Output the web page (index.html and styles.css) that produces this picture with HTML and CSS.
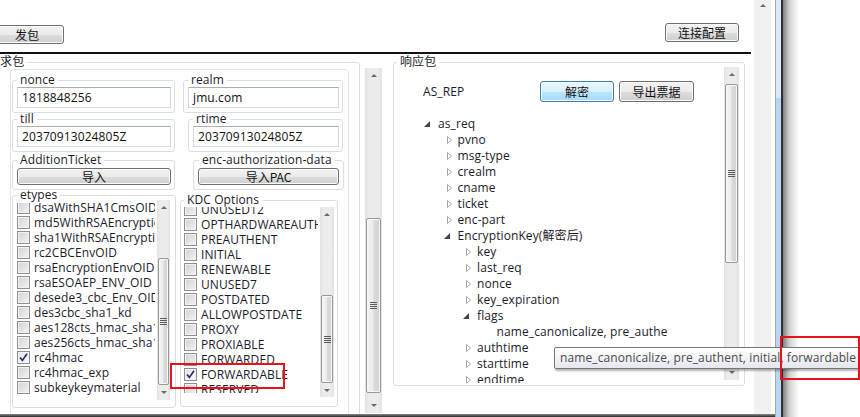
FILE: index.html
```html
<!DOCTYPE html>
<html lang="zh">
<head>
<meta charset="utf-8">
<title>Kerberos 发包</title>
<link rel="stylesheet" href="styles.css">
</head>
<body>
<div class="screen">
  <div class="window">
    <div class="window-top">
      <div class="client">
        <div class="toolbar">
          <button class="btn btn-send">发包</button>
          <button class="btn btn-conn">连接配置</button>
        </div>
        <div class="rule"></div>
        <div class="main">
          <fieldset class="gb gb-req">
            <legend>请求包</legend>
            <div class="req-panel">
              <div class="row row1">
                <fieldset class="gb gb-nonce"><legend>nonce</legend><div class="gb-body body-tb"><div class="tb">1818848256</div></div></fieldset>
                <fieldset class="gb gb-realm"><legend>realm</legend><div class="gb-body body-tb"><div class="tb">jmu.com</div></div></fieldset>
              </div>
              <div class="row row2">
                <fieldset class="gb gb-till"><legend>till</legend><div class="gb-body body-tb"><div class="tb">20370913024805Z</div></div></fieldset>
                <fieldset class="gb gb-rtime"><legend>rtime</legend><div class="gb-body body-tb"><div class="tb">20370913024805Z</div></div></fieldset>
              </div>
              <div class="row row3">
                <fieldset class="gb gb-addt"><legend>AdditionTicket</legend><div class="gb-body body-btn"><button class="btn btn-wide">导入</button></div></fieldset>
                <fieldset class="gb gb-enca"><legend>enc-authorization-data</legend><div class="gb-body body-btn body-enca"><button class="btn btn-wide">导入PAC</button></div></fieldset>
              </div>
              <div class="row row4">
                <fieldset class="gb gb-etypes">
                  <legend>etypes</legend>
                  <div class="list list-etypes">
                    <div class="items">
                      <div class="items-inner">
                        <div class="item"><span class="cb"></span><span class="lbl">dsaWithSHA1CmsOID</span></div>
                        <div class="item"><span class="cb"></span><span class="lbl">md5WithRSAEncryption</span></div>
                        <div class="item"><span class="cb"></span><span class="lbl">sha1WithRSAEncryption</span></div>
                        <div class="item"><span class="cb"></span><span class="lbl">rc2CBCEnvOID</span></div>
                        <div class="item"><span class="cb"></span><span class="lbl">rsaEncryptionEnvOID</span></div>
                        <div class="item"><span class="cb"></span><span class="lbl">rsaESOAEP_ENV_OID</span></div>
                        <div class="item"><span class="cb"></span><span class="lbl">desede3_cbc_Env_OID</span></div>
                        <div class="item"><span class="cb"></span><span class="lbl">des3cbc_sha1_kd</span></div>
                        <div class="item"><span class="cb"></span><span class="lbl">aes128cts_hmac_sha1_96</span></div>
                        <div class="item"><span class="cb"></span><span class="lbl">aes256cts_hmac_sha1_96</span></div>
                        <div class="item"><span class="cb checked"><svg viewBox="0 0 11 11" width="11" height="11"><path d="M2 5.5 L4.4 8.4 L9 1.8" fill="none" stroke="#22307a" stroke-width="1.7"/></svg></span><span class="lbl">rc4hmac</span></div>
                        <div class="item"><span class="cb"></span><span class="lbl">rc4hmac_exp</span></div>
                        <div class="item"><span class="cb"></span><span class="lbl">subkeykeymaterial</span></div>
                      </div>
                    </div>
                    <div class="sb sb-etypes">
                      <div class="sb-btn"><span class="arr-up"></span></div>
                      <div class="sb-track"><div class="sb-thumb"><span class="grip"></span></div></div>
                      <div class="sb-btn"><span class="arr-down"></span></div>
                    </div>
                  </div>
                </fieldset>
                <fieldset class="gb gb-kdc">
                  <legend>KDC Options</legend>
                  <div class="list list-kdc">
                    <div class="items">
                      <div class="items-inner">
                        <div class="item"><span class="cb"></span><span class="lbl">UNUSED12</span></div>
                        <div class="item"><span class="cb"></span><span class="lbl">OPTHARDWAREAUTH</span></div>
                        <div class="item"><span class="cb"></span><span class="lbl">PREAUTHENT</span></div>
                        <div class="item"><span class="cb"></span><span class="lbl">INITIAL</span></div>
                        <div class="item"><span class="cb"></span><span class="lbl">RENEWABLE</span></div>
                        <div class="item"><span class="cb"></span><span class="lbl">UNUSED7</span></div>
                        <div class="item"><span class="cb"></span><span class="lbl">POSTDATED</span></div>
                        <div class="item"><span class="cb"></span><span class="lbl">ALLOWPOSTDATE</span></div>
                        <div class="item"><span class="cb"></span><span class="lbl">PROXY</span></div>
                        <div class="item"><span class="cb"></span><span class="lbl">PROXIABLE</span></div>
                        <div class="item"><span class="cb"></span><span class="lbl">FORWARDED</span></div>
                        <div class="item"><span class="cb checked"><svg viewBox="0 0 11 11" width="11" height="11"><path d="M2 5.5 L4.4 8.4 L9 1.8" fill="none" stroke="#22307a" stroke-width="1.7"/></svg></span><span class="lbl">FORWARDABLE</span></div>
                        <div class="item"><span class="cb"></span><span class="lbl">RESERVED</span></div>
                      </div>
                    </div>
                    <div class="sb sb-kdc">
                      <div class="sb-btn"><span class="arr-up"></span></div>
                      <div class="sb-track"><div class="sb-thumb"><span class="grip"></span></div></div>
                      <div class="sb-btn"><span class="arr-down"></span></div>
                    </div>
                  </div>
                </fieldset>
              </div>
            </div>
          </fieldset>

          <div class="sb sb-outer">
            <div class="sb-btn"><span class="arr-up"></span></div>
            <div class="sb-track"><div class="sb-thumb"><span class="grip"></span></div></div>
            <div class="sb-btn"><span class="arr-down"></span></div>
          </div>

          <fieldset class="gb gb-resp">
            <legend>响应包</legend>
            <div class="resp-inner">
              <div class="resp-body">
                <div class="resp-head">
                  <span class="as-rep">AS_REP</span>
                  <button class="btn btn-blue">解密</button>
                  <button class="btn btn-export">导出票据</button>
                </div>
                <div class="tree">
                  <div class="node l0"><span class="exp expanded"><svg width="6" height="6" viewBox="0 0 6 6"><path d="M6 0 L6 6 L0 6 Z" fill="#444"/></svg></span><span>as_req</span></div>
                  <div class="node l1"><span class="exp collapsed"><svg width="5" height="8" viewBox="0 0 5 8"><path d="M0.5 0.5 L4.5 4 L0.5 7.5 Z" fill="#fff" stroke="#a6a6a6"/></svg></span><span>pvno</span></div>
                  <div class="node l1"><span class="exp collapsed"><svg width="5" height="8" viewBox="0 0 5 8"><path d="M0.5 0.5 L4.5 4 L0.5 7.5 Z" fill="#fff" stroke="#a6a6a6"/></svg></span><span>msg-type</span></div>
                  <div class="node l1"><span class="exp collapsed"><svg width="5" height="8" viewBox="0 0 5 8"><path d="M0.5 0.5 L4.5 4 L0.5 7.5 Z" fill="#fff" stroke="#a6a6a6"/></svg></span><span>crealm</span></div>
                  <div class="node l1"><span class="exp collapsed"><svg width="5" height="8" viewBox="0 0 5 8"><path d="M0.5 0.5 L4.5 4 L0.5 7.5 Z" fill="#fff" stroke="#a6a6a6"/></svg></span><span>cname</span></div>
                  <div class="node l1"><span class="exp collapsed"><svg width="5" height="8" viewBox="0 0 5 8"><path d="M0.5 0.5 L4.5 4 L0.5 7.5 Z" fill="#fff" stroke="#a6a6a6"/></svg></span><span>ticket</span></div>
                  <div class="node l1"><span class="exp collapsed"><svg width="5" height="8" viewBox="0 0 5 8"><path d="M0.5 0.5 L4.5 4 L0.5 7.5 Z" fill="#fff" stroke="#a6a6a6"/></svg></span><span>enc-part</span></div>
                  <div class="node l1"><span class="exp expanded"><svg width="6" height="6" viewBox="0 0 6 6"><path d="M6 0 L6 6 L0 6 Z" fill="#444"/></svg></span><span>EncryptionKey(解密后)</span></div>
                  <div class="node l2"><span class="exp collapsed"><svg width="5" height="8" viewBox="0 0 5 8"><path d="M0.5 0.5 L4.5 4 L0.5 7.5 Z" fill="#fff" stroke="#a6a6a6"/></svg></span><span>key</span></div>
                  <div class="node l2"><span class="exp collapsed"><svg width="5" height="8" viewBox="0 0 5 8"><path d="M0.5 0.5 L4.5 4 L0.5 7.5 Z" fill="#fff" stroke="#a6a6a6"/></svg></span><span>last_req</span></div>
                  <div class="node l2"><span class="exp collapsed"><svg width="5" height="8" viewBox="0 0 5 8"><path d="M0.5 0.5 L4.5 4 L0.5 7.5 Z" fill="#fff" stroke="#a6a6a6"/></svg></span><span>nonce</span></div>
                  <div class="node l2"><span class="exp collapsed"><svg width="5" height="8" viewBox="0 0 5 8"><path d="M0.5 0.5 L4.5 4 L0.5 7.5 Z" fill="#fff" stroke="#a6a6a6"/></svg></span><span>key_expiration</span></div>
                  <div class="node l2"><span class="exp expanded"><svg width="6" height="6" viewBox="0 0 6 6"><path d="M6 0 L6 6 L0 6 Z" fill="#444"/></svg></span><span>flags</span></div>
                  <div class="node l3"><span class="exp"></span><span>name_canonicalize, pre_authe</span></div>
                  <div class="node l2"><span class="exp collapsed"><svg width="5" height="8" viewBox="0 0 5 8"><path d="M0.5 0.5 L4.5 4 L0.5 7.5 Z" fill="#fff" stroke="#a6a6a6"/></svg></span><span>authtime</span></div>
                  <div class="node l2"><span class="exp collapsed"><svg width="5" height="8" viewBox="0 0 5 8"><path d="M0.5 0.5 L4.5 4 L0.5 7.5 Z" fill="#fff" stroke="#a6a6a6"/></svg></span><span>starttime</span></div>
                  <div class="node l2"><span class="exp collapsed"><svg width="5" height="8" viewBox="0 0 5 8"><path d="M0.5 0.5 L4.5 4 L0.5 7.5 Z" fill="#fff" stroke="#a6a6a6"/></svg></span><span>endtime</span></div>
                </div>
              </div>
              <div class="sb sb-resp">
                <div class="sb-btn"><span class="arr-up"></span></div>
                <div class="sb-track"><div class="sb-thumb"><span class="grip"></span></div></div>
                <div class="sb-btn"><span class="arr-down"></span></div>
              </div>
            </div>
          </fieldset>
        </div>
      </div>
      <div class="win-scroll">
        <div class="sb-btn win-up"><span class="arr-up"></span></div>
      </div>
    </div>
    <div class="statusbar"></div>
  </div>
  <div class="frame"></div>
  <div class="shadow"></div>

  <div class="tooltip">name_canonicalize, pre_authent, initial, forwardable</div>
  <div class="mark mark-left"></div>
  <div class="mark mark-right"></div>
</div>
</body>
</html>
```

FILE: styles.css
```css
* { box-sizing: border-box; }
html, body { margin: 0; padding: 0; }
body {
  font-family: "Open Sans", "Noto Sans CJK SC", sans-serif;
  font-size: 12px;
  letter-spacing: 0.1px;
  color: #1b1b2b;
  background: #fff;
  width: 860px;
  height: 417px;
  overflow: hidden;
}

.screen {
  position: relative;
  display: flex;
  width: 860px;
  height: 417px;
  overflow: hidden;
  background: #fff;
}

/* window */
.window { display: flex; flex-direction: column; width: 775px; height: 417px; }
.window-top { display: flex; height: 414px; }
.client { width: 754px; height: 414px; overflow: hidden; }
.win-scroll { width: 17px; height: 414px; background: #f1f1f1; display: flex; flex-direction: column; }
.win-up { height: 11px; }
.statusbar { height: 3px; background: linear-gradient(#8a8a8a, #2c2c2c); }
.frame {
  width: 8px; height: 417px;
  border-left: 1px solid #a4abb2;
  background:
    linear-gradient(90deg, transparent 5px, #303030 5px),
    linear-gradient(#d9e9f8 0, #d9e9f8 98px, #b7d6f4 98px);
}
.shadow { width: 16px; height: 417px; background: linear-gradient(90deg, rgba(0,0,0,.5), rgba(0,0,0,.18) 40%, rgba(0,0,0,0)); }

/* toolbar */
.toolbar { height: 52px; display: flex; justify-content: space-between; align-items: flex-start; }
.rule { height: 2px; width: 751px; background: #111; }

/* buttons */
.btn {
  font-family: "Noto Sans CJK SC", "Open Sans", sans-serif;
  font-size: 12px;
  letter-spacing: 0;
  color: #111;
  padding: 0;
  height: 19px;
  line-height: 16px;
  border: 1px solid #707070;
  border-radius: 3px;
  background: linear-gradient(#f2f2f2 0%, #ebebeb 50%, #dddddd 50%, #cfcfcf 100%);
  box-shadow: inset 0 0 0 1px #fbfbfb;
  text-align: center;
}
.btn-send { margin-left: -10px; margin-top: 25px; width: 74px; }
.btn-conn { margin-top: 23px; width: 74px; margin-right: 15px; }
.btn-wide { display: block; width: 100%; height: 17px; line-height: 14px; }
.btn-blue {
  width: 74px; height: 21px; line-height: 18px;
  border-color: #3c7fb1;
  background: linear-gradient(#eaf6fd 0%, #d9f0fc 50%, #bee6fd 50%, #a7d9f5 100%);
  box-shadow: inset 0 0 0 1px #f4fbff;
}
.btn-export { width: 75px; height: 21px; line-height: 18px; margin-left: 5px; }

/* main layout */
.main { display: flex; align-items: flex-start; height: 360px; overflow: hidden; }

/* group boxes */
.gb {
  margin: 0;
  padding: 0;
  min-width: 0;
  border: 1px solid #d5dfe5;
  border-radius: 3px;
}
.gb > legend {
  padding: 0 3px;
  margin-left: 4px;
  height: 14px;
  line-height: 14px;
  font-size: 12px;
  white-space: nowrap;
}

.gb-req { margin-left: -22px; margin-top: 1px; width: 382px; height: 370px; }
.gb-req > legend { margin-left: 6px; }
.req-panel {
  margin: 0 10px 0 31px;
  width: 339px;
  height: 360px;
  border: 1px solid #dfe5ea;
  border-radius: 3px;
  overflow: hidden;
}

.row { display: flex; align-items: flex-start; }
.row1 { margin-top: 3px; }
.row2 { margin-top: -1px; }
.row3 { margin-top: 1px; }
.row4 { margin-top: -2px; }

.gb-nonce { margin-left: 1px; width: 163px; }
.gb-realm { margin-left: 8px; width: 160px; }
.gb-till { margin-left: 1px; width: 163px; }
.gb-rtime { margin-left: 13px; width: 155px; }
.gb-addt { margin-left: 1px; width: 163px; }
.gb-enca { margin-left: 18px; width: 151px; }
.gb-enca > legend { margin-left: 5px; }
.gb-etypes { margin-left: 1px; width: 164px; }
.gb-kdc { margin-left: 4px; margin-top: 5px; width: 158px; }
.gb-kdc > legend { margin-left: 3px; }

.body-tb { padding: 0 3px 4px 4px; }
.body-btn { padding: 1px 3px 4px 4px; }
.body-enca { padding-right: 4px; }

.tb {
  height: 21px;
  border: 1px solid #d4d9de;
  border-top-color: #abadb3;
  padding-left: 4px;
  line-height: 19px;
  color: #111;
  white-space: nowrap;
  overflow: hidden;
}

/* lists */
.list { display: flex; align-items: flex-start; }
.items { overflow: hidden; }
.item { display: flex; align-items: center; height: 15px; white-space: nowrap; }
.lbl { margin-left: 4px; line-height: 15px; }
.cb {
  flex: none;
  width: 13px; height: 13px;
  border: 1px solid #8e8f8f;
  background: linear-gradient(135deg, #d0d2d6, #f3f3f3);
  box-shadow: inset 0 0 0 1px #f2f2f2;
  display: flex; align-items: center; justify-content: center;
}
.cb.checked { background: linear-gradient(135deg, #e4e4e4, #fafafa); }

.list-etypes { height: 197px; margin-top: 1px; padding-right: 5px; margin-bottom: 7px; }
.list-etypes .items { width: 142px; height: 197px; padding-left: 4px; }
.list-etypes .items-inner { margin-top: -3px; }

.list-kdc { height: 190px; padding-right: 3px; margin-bottom: 9px; }
.list-kdc .items { width: 137px; height: 186px; padding-left: 3px; }
.list-kdc .items-inner { margin-top: -5px; }

/* scrollbars */
.sb {
  flex: none;
  display: flex;
  flex-direction: column;
  background: linear-gradient(90deg, #e2e2e2, #ececec 25%, #ececec 75%, #e2e2e2);
}
.sb-btn { flex: none; height: 15px; display: flex; align-items: center; justify-content: center; }
.sb-track { flex: 1; }
.sb-thumb {
  margin: 0 1px;
  border: 1px solid #979797;
  border-radius: 2px;
  background: linear-gradient(90deg, #f4f4f4, #ececec 45%, #dadada 55%, #d2d2d2);
  box-shadow: inset 0 0 0 1px #f8f8f8;
  display: flex; align-items: center; justify-content: center;
}
.grip {
  width: 7px; height: 7px;
  background: linear-gradient(#5c5c5c 1px, transparent 1px);
  background-size: 100% 2px;
}
.arr-up { width: 0; height: 0; border-left: 3px solid transparent; border-right: 3px solid transparent; border-bottom: 3px solid #6a6a6a; }
.arr-down { width: 0; height: 0; border-left: 3px solid transparent; border-right: 3px solid transparent; border-top: 3px solid #6a6a6a; }

.sb-etypes { width: 13px; height: 200px; margin-top: -3px; margin-left: 2px; }
.sb-etypes .sb-thumb { margin-top: 43px; height: 127px; }
.sb-kdc { width: 14px; height: 190px; margin-left: 2px; }
.sb-kdc .sb-thumb { margin-top: 73px; height: 88px; }
.sb-outer { width: 17px; height: 345px; margin-left: 5px; margin-top: 14px; }
.sb-outer .sb-thumb { margin-top: 135px; height: 175px; }
.sb-resp { width: 15px; height: 313px; margin-top: -2px; margin-right: 5px; }
.sb-resp .sb-thumb { margin-top: 2px; height: 179px; }
.win-scroll .sb-btn { height: 11px; }

/* response group */
.gb-resp { margin-left: 11px; margin-top: 1px; width: 352px; height: 331px; }
.gb-resp > legend { margin-left: 3px; }
.resp-inner { display: flex; align-items: flex-start; height: 316px; }
.resp-body { flex: 1; height: 314px; overflow: hidden; }
.resp-head { display: flex; margin-top: 12px; padding-left: 29px; height: 21px; }
.as-rep { width: 117px; line-height: 21px; }

.tree { margin-top: 14px; padding-left: 25px; }
.node { display: flex; align-items: center; height: 16px; line-height: 16px; white-space: nowrap; }
.l1 { padding-left: 19.5px; }
.l2 { padding-left: 39px; }
.l3 { padding-left: 58.5px; }
.exp { flex: none; width: 19px; height: 16px; display: flex; align-items: center; }
.exp.collapsed { padding-left: 8px; }
.exp.expanded { padding-left: 5px; }

/* overlays */
.tooltip {
  position: absolute;
  left: 554px; top: 347px;
  width: 320px; height: 22px;
  padding-left: 5px;
  line-height: 19px;
  white-space: nowrap;
  color: #4a4a4a;
  border: 1px solid #767676;
  border-radius: 2px;
  background: linear-gradient(#ffffff, #e6e7ef);
  box-shadow: 1px 2px 2px rgba(0,0,0,.3);
  z-index: 5;
}
.mark { position: absolute; border: 2px solid #e8121b; z-index: 6; }
.mark-left { left: 170px; top: 363px; width: 115px; height: 26px; }
.mark-right { left: 780px; top: 336px; width: 80px; height: 44px; }
```
